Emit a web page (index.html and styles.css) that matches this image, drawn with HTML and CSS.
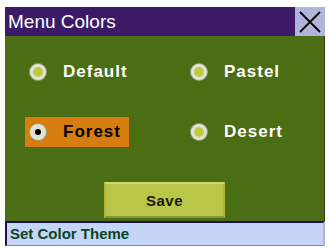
FILE: index.html
```html
<!DOCTYPE html>
<html lang="en">
<head>
    <meta charset="UTF-8">
    <meta name="viewport" content="width=device-width, initial-scale=1.0">
    <title>Menu Colors</title>
    <link rel="stylesheet" href="styles.css">
</head>
<body>
    <div class="window">
        <div class="header">
            <span class="titulo">Menu Colors</span>
            <button class="close" type="button">
                <svg width="24" height="24" viewBox="0 0 24 24">
                    <path d="M2 2 L22 22 M22 2 L2 22" stroke="#000" stroke-width="1.8" fill="none"/>
                </svg>
            </button>
        </div>
        <div class="content">
            <div class="options">
                <div class="option">
                    <span class="radio"></span>
                    <span class="label">Default</span>
                </div>
                <div class="option">
                    <span class="radio"></span>
                    <span class="label">Pastel</span>
                </div>
                <div class="option selected">
                    <span class="radio"></span>
                    <span class="label">Forest</span>
                </div>
                <div class="option">
                    <span class="radio"></span>
                    <span class="label">Desert</span>
                </div>
            </div>
            <div class="actions">
                <button class="button" type="button">Save</button>
            </div>
        </div>
        <div class="status">Set Color Theme</div>
    </div>
</body>
</html>
```

FILE: styles.css
```css
body {
    margin: 0;
    background-color: #ffffff;
    font-family: "Liberation Sans", Arial, sans-serif;
}

.window {
    width: 320px;
    margin: 7px 0 0 5px;
}

.header {
    background-color: #3b1b68;
    height: 29px;
    display: flex;
    align-items: center;
    justify-content: space-between;
}

.titulo {
    color: #ffffff;
    font-size: 19px;
    padding-left: 3px;
}

.close {
    width: 30px;
    height: 29px;
    border: none;
    padding: 0;
    background-color: #b2b5da;
    display: flex;
    align-items: center;
    justify-content: center;
}

.content {
    background-color: #4b6d13;
    height: 185px;
    padding: 21px 0 0 20px;
    box-sizing: border-box;
    border-right: 1px solid #2c3a10;
}

.options {
    display: grid;
    grid-template-columns: 161px 130px;
    row-gap: 30px;
}

.option {
    display: flex;
    align-items: center;
    height: 30px;
    padding-left: 5px;
    width: 104px;
    box-sizing: border-box;
}

.option.selected {
    background-color: #d67d0e;
}

.radio {
    width: 16px;
    height: 16px;
    border-radius: 50%;
    background-color: #bccb3f;
    border: 3px solid #e2e2d8;
    box-sizing: border-box;
    margin-right: 17px;
    position: relative;
    box-shadow: 0 0 0 1px #9aa07a;
}

.selected .radio {
    background-color: #e4e2c0;
}

.selected .radio::after {
    content: "";
    position: absolute;
    left: 2px;
    top: 2px;
    width: 6px;
    height: 6px;
    border-radius: 50%;
    background-color: #000000;
}

.label {
    color: #ffffff;
    font-size: 17px;
    font-weight: bold;
    letter-spacing: 1px;
}

.selected .label {
    color: #000000;
}

.actions {
    display: flex;
    justify-content: center;
    margin-top: 35px;
    margin-left: -20px;
}

.button {
    width: 121px;
    height: 36px;
    background-color: #b9c647;
    border: 2px solid #a9b53c;
    border-top-color: #cdd86a;
    border-bottom-color: #8c9630;
    color: #1a1a10;
    font-family: "Liberation Sans", Arial, sans-serif;
    font-weight: bold;
    font-size: 15px;
    letter-spacing: 0.5px;
}

.status {
    background-color: #c5d5f5;
    height: 25px;
    box-sizing: border-box;
    border-top: 2px solid #1a1250;
    border-left: 2px solid #1a1250;
    border-right: 2px solid #b8b4d0;
    border-bottom: 1px solid #8c88b0;
    color: #0c4424;
    font-weight: bold;
    font-size: 15px;
    padding-left: 3px;
    line-height: 21px;
}
```
